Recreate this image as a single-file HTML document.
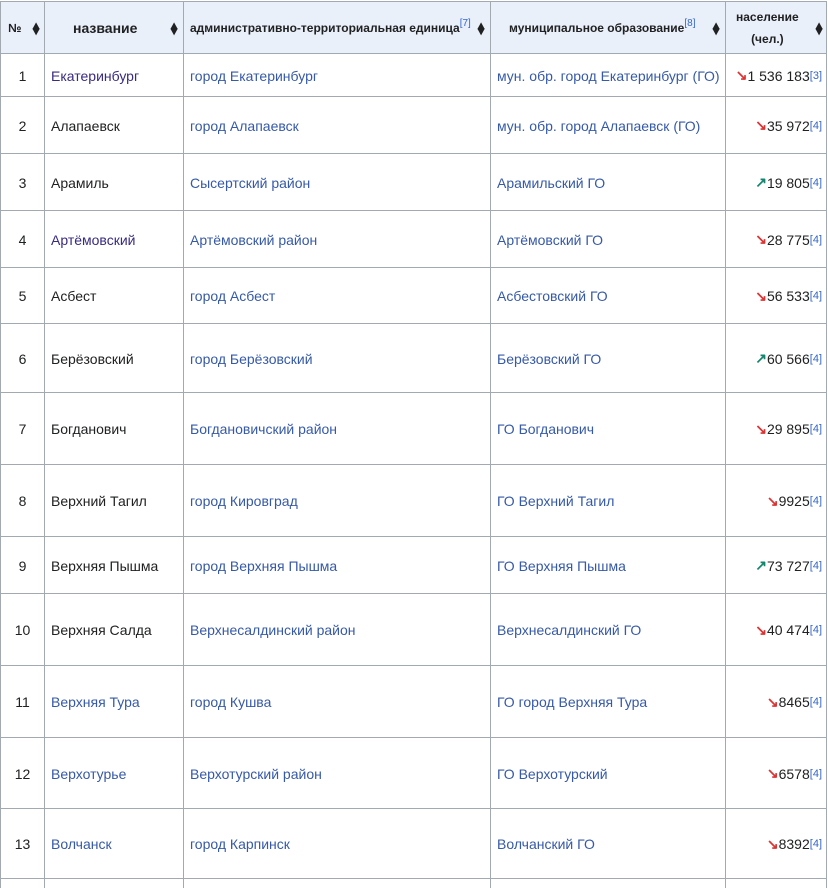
<!DOCTYPE html>
<html><head><meta charset="utf-8"><style>
body{margin:0;background:#fff;font-family:"Liberation Sans",Arial,sans-serif;font-size:14px;color:#202122;width:828px;height:881px;overflow:hidden;position:relative}
.r{position:absolute;left:0;width:827px;display:flex;box-sizing:border-box;border-top:1px solid #a2a9b1;border-left:1px solid #a2a9b1;border-right:1px solid #a2a9b1}
.c{box-sizing:border-box;border-right:1px solid #a2a9b1;display:flex;align-items:center;padding:0 6px;white-space:nowrap;height:100%}
.c:last-child{border-right:none}
.w1{width:44px;justify-content:center}.w2{width:139px}.w3{width:307px}.w4{width:235px}.w5{width:100px;justify-content:flex-end;padding-right:4px}
.h{background:#eaf0fa;font-weight:bold;font-size:12px}
.h .c{justify-content:space-between}
.s{font-size:12px;color:#202122;margin-left:4px;line-height:6px;display:inline-flex;flex-direction:column;transform:scaleX(1.1)}
a{color:#3659a8;text-decoration:none}
.v{color:#3a2a80}
sup{font-size:11px;vertical-align:6px;line-height:0}
.h sup{font-size:10px;font-weight:normal}
sup a{color:#3366cc}
.dn{color:#d33;font-weight:bold}.up{color:#14866d;font-weight:bold}
</style></head><body>
<div class="r h" style="top:1px;height:53px">
<div class="c w1" style="padding:0 5px 0 7px">№<span class="s"><span>▴</span><span>▾</span></span></div>
<div class="c w2" style="font-size:14px"><span style="margin-left:22px">название</span><span class="s"><span>▴</span><span>▾</span></span></div>
<div class="c w3"><span>административно-территориальная единица<sup><a>[7]</a></sup></span><span class="s"><span>▴</span><span>▾</span></span></div>
<div class="c w4" style="padding-left:18px"><span>муниципальное образование<sup><a>[8]</a></sup></span><span class="s"><span>▴</span><span>▾</span></span></div>
<div class="c w5" style="line-height:22px"><span style="text-align:center;margin-left:4px">население<br>(чел.)</span><span class="s"><span>▴</span><span>▾</span></span></div>
</div>
<div class="r" style="top:53px;height:44px"><div class="c w1">1</div><div class="c w2"><a class="v">Екатеринбург</a></div><div class="c w3"><a>город Екатеринбург</a></div><div class="c w4"><a>мун. обр. город Екатеринбург (ГО)</a></div><div class="c w5"><span class="dn">↘</span>1 536 183<sup><a>[3]</a></sup></div></div>
<div class="r" style="top:96px;height:58px"><div class="c w1">2</div><div class="c w2">Алапаевск</div><div class="c w3"><a>город Алапаевск</a></div><div class="c w4"><a>мун. обр. город Алапаевск (ГО)</a></div><div class="c w5"><span class="dn">↘</span>35 972<sup><a>[4]</a></sup></div></div>
<div class="r" style="top:153px;height:58px"><div class="c w1">3</div><div class="c w2">Арамиль</div><div class="c w3"><a>Сысертский район</a></div><div class="c w4"><a>Арамильский ГО</a></div><div class="c w5"><span class="up">↗</span>19 805<sup><a>[4]</a></sup></div></div>
<div class="r" style="top:210px;height:58px"><div class="c w1">4</div><div class="c w2"><a class="v">Артёмовский</a></div><div class="c w3"><a>Артёмовский район</a></div><div class="c w4"><a>Артёмовский ГО</a></div><div class="c w5"><span class="dn">↘</span>28 775<sup><a>[4]</a></sup></div></div>
<div class="r" style="top:267px;height:57px"><div class="c w1">5</div><div class="c w2">Асбест</div><div class="c w3"><a>город Асбест</a></div><div class="c w4"><a>Асбестовский ГО</a></div><div class="c w5"><span class="dn">↘</span>56 533<sup><a>[4]</a></sup></div></div>
<div class="r" style="top:323px;height:70px"><div class="c w1">6</div><div class="c w2">Берёзовский</div><div class="c w3"><a>город Берёзовский</a></div><div class="c w4"><a>Берёзовский ГО</a></div><div class="c w5"><span class="up">↗</span>60 566<sup><a>[4]</a></sup></div></div>
<div class="r" style="top:392px;height:73px"><div class="c w1">7</div><div class="c w2">Богданович</div><div class="c w3"><a>Богдановичский район</a></div><div class="c w4"><a>ГО Богданович</a></div><div class="c w5"><span class="dn">↘</span>29 895<sup><a>[4]</a></sup></div></div>
<div class="r" style="top:464px;height:73px"><div class="c w1">8</div><div class="c w2">Верхний Тагил</div><div class="c w3"><a>город Кировград</a></div><div class="c w4"><a>ГО Верхний Тагил</a></div><div class="c w5"><span class="dn">↘</span>9925<sup><a>[4]</a></sup></div></div>
<div class="r" style="top:536px;height:58px"><div class="c w1">9</div><div class="c w2">Верхняя Пышма</div><div class="c w3"><a>город Верхняя Пышма</a></div><div class="c w4"><a>ГО Верхняя Пышма</a></div><div class="c w5"><span class="up">↗</span>73 727<sup><a>[4]</a></sup></div></div>
<div class="r" style="top:593px;height:73px"><div class="c w1">10</div><div class="c w2">Верхняя Салда</div><div class="c w3"><a>Верхнесалдинский район</a></div><div class="c w4"><a>Верхнесалдинский ГО</a></div><div class="c w5"><span class="dn">↘</span>40 474<sup><a>[4]</a></sup></div></div>
<div class="r" style="top:665px;height:73px"><div class="c w1">11</div><div class="c w2"><a>Верхняя Тура</a></div><div class="c w3"><a>город Кушва</a></div><div class="c w4"><a>ГО город Верхняя Тура</a></div><div class="c w5"><span class="dn">↘</span>8465<sup><a>[4]</a></sup></div></div>
<div class="r" style="top:737px;height:72px"><div class="c w1">12</div><div class="c w2"><a>Верхотурье</a></div><div class="c w3"><a>Верхотурский район</a></div><div class="c w4"><a>ГО Верхотурский</a></div><div class="c w5"><span class="dn">↘</span>6578<sup><a>[4]</a></sup></div></div>
<div class="r" style="top:808px;height:71px"><div class="c w1">13</div><div class="c w2"><a>Волчанск</a></div><div class="c w3"><a>город Карпинск</a></div><div class="c w4"><a>Волчанский ГО</a></div><div class="c w5"><span class="dn">↘</span>8392<sup><a>[4]</a></sup></div></div>
<div class="r" style="top:878px;height:10px"><div class="c w1"></div><div class="c w2"></div><div class="c w3"></div><div class="c w4"></div><div class="c w5"></div></div>
</body></html>
